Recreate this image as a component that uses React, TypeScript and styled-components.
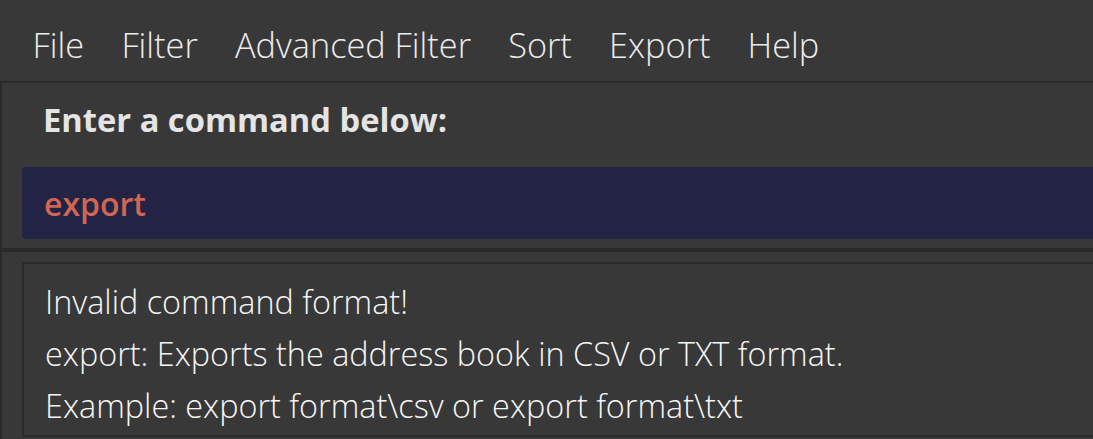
import React from "react";
import styled, { createGlobalStyle } from "styled-components";

const GlobalStyle = createGlobalStyle`
  html, body {
    margin: 0;
    padding: 0;
    background: #2a2a2a;
    overflow: hidden;
  }
  body {
    font-family: "Open Sans", "Noto Sans", sans-serif;
  }
`;

const Page = styled.div`
  width: 1093px;
  height: 439px;
  display: flex;
  flex-direction: column;
  background: #2a2a2a;
`;

const MenuBar = styled.nav`
  height: 73px;
  flex: none;
  display: flex;
  align-items: center;
  padding: 8px 0 0 14px;
  background: #383838;
  border-bottom: 2px solid #2a2a2a;
`;

const MenuItem = styled.span`
  padding: 0 18.6px;
  font-size: 34.3px;
  font-weight: 300;
  color: #ececec;
  white-space: nowrap;
`;

const Panels = styled.div`
  flex: 1;
  display: flex;
  flex-direction: column;
  gap: 4px;
  padding-left: 2px;
  min-height: 0;
`;

const CommandPanel = styled.section`
  height: 165px;
  flex: none;
  box-sizing: border-box;
  background: #383838;
  padding: 14px 0 0 20px;
  display: flex;
  flex-direction: column;
`;

const PanelLabel = styled.div`
  padding-left: 21px;
  height: 70px;
  font-size: 32.7px;
  font-weight: 700;
  color: #e4e4e4;
  line-height: 46px;
  white-space: nowrap;
`;

const CommandBox = styled.div`
  height: 72px;
  background: #232346;
  border-radius: 4px 0 0 4px;
  display: flex;
  align-items: center;
  padding-left: 22px;
  font-size: 32px;
  font-weight: 600;
  color: #d06651;
`;

const ResultPanel = styled.section`
  flex: 1;
  background: #383838;
  padding: 10px 0 0 20px;
  min-height: 0;
`;

const ResultBox = styled.div`
  height: 175px;
  box-sizing: border-box;
  border: 2px solid #2a2a2a;
  border-right: none;
  padding: 11px 0 0 21px;
`;

const ResultLine = styled.div`
  font-size: 32.4px;
  font-weight: 300;
  line-height: 52px;
  color: #f6f6f6;
  white-space: nowrap;
`;

const menus = ["File", "Filter", "Advanced Filter", "Sort", "Export", "Help"];
const lines = [
  "Invalid command format!",
  "export: Exports the address book in CSV or TXT format.",
  "Example: export format\\csv or export format\\txt",
];

export default function App() {
  return (
    <>
      <GlobalStyle />
      <Page>
        <MenuBar>
          {menus.map((m) => (
            <MenuItem key={m}>{m}</MenuItem>
          ))}
        </MenuBar>
        <Panels>
          <CommandPanel>
            <PanelLabel>Enter a command below:</PanelLabel>
            <CommandBox>export</CommandBox>
          </CommandPanel>
          <ResultPanel>
            <ResultBox>
              {lines.map((l) => (
                <ResultLine key={l}>{l}</ResultLine>
              ))}
            </ResultBox>
          </ResultPanel>
        </Panels>
      </Page>
    </>
  );
}
